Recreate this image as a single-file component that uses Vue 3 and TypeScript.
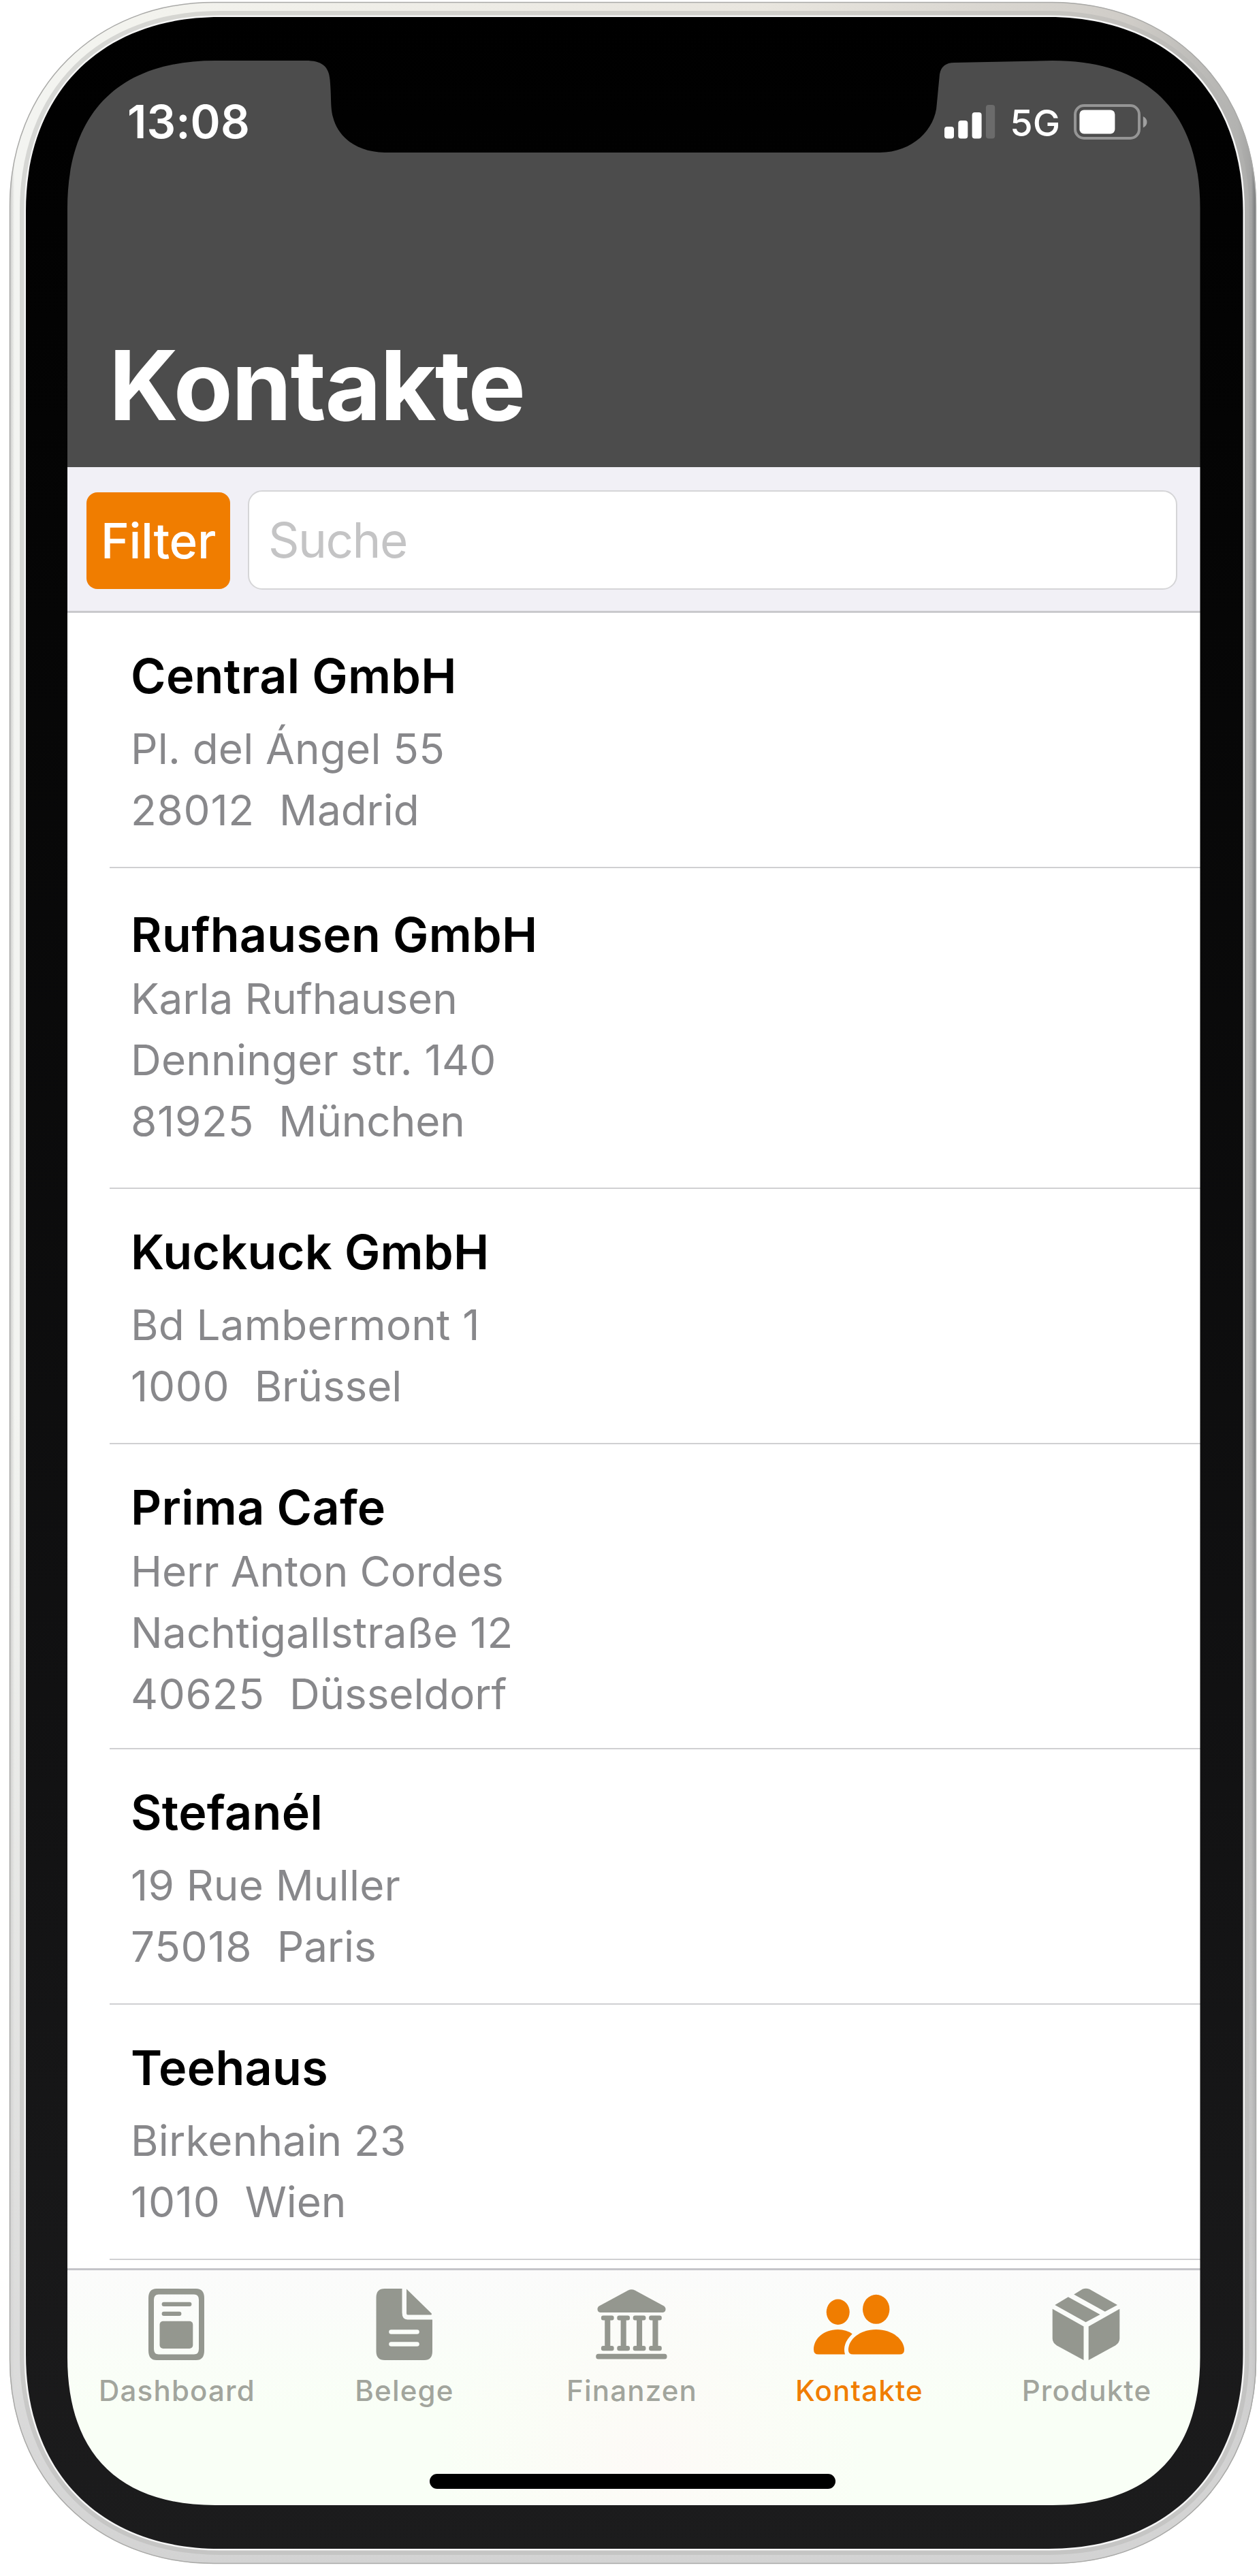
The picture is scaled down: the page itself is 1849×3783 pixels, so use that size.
<script setup lang="ts">
import { ref } from 'vue'

interface Contact {
  name: string
  person?: string
  street: string
  zip: string
  city: string
  roomy?: boolean
}

type TabId = 'dashboard' | 'belege' | 'finanzen' | 'kontakte' | 'produkte'

interface Tab {
  id: TabId
  label: string
}

const contacts: Contact[] = [
  { name: 'Central GmbH', street: 'Pl. del Ángel 55', zip: '28012', city: 'Madrid' },
  { name: 'Rufhausen GmbH', person: 'Karla Rufhausen', street: 'Denninger str. 140', zip: '81925', city: 'München', roomy: true },
  { name: 'Kuckuck GmbH', street: 'Bd Lambermont 1', zip: '1000', city: 'Brüssel' },
  { name: 'Prima Cafe', person: 'Herr Anton Cordes', street: 'Nachtigallstraße 12', zip: '40625', city: 'Düsseldorf' },
  { name: 'Stefanél', street: '19 Rue Muller', zip: '75018', city: 'Paris' },
  { name: 'Teehaus', street: 'Birkenhain 23', zip: '1010', city: 'Wien' },
]

const tabs: Tab[] = [
  { id: 'dashboard', label: 'Dashboard' },
  { id: 'belege', label: 'Belege' },
  { id: 'finanzen', label: 'Finanzen' },
  { id: 'kontakte', label: 'Kontakte' },
  { id: 'produkte', label: 'Produkte' },
]

const active = ref<TabId>('kontakte')
const query = ref('')
const columns = [882.9, 906.3, 929.7, 953.1]
</script>

<template>
  <div class="device">
    <main class="screen">
      <header class="header">
        <div class="status">
          <span class="time">13:08</span>
          <div class="status-right">
            <svg class="signal" viewBox="0 0 75 50">
              <rect x="0" y="32" width="14" height="17.5" rx="4" />
              <rect x="20.3" y="23" width="14" height="26.5" rx="4" />
              <rect x="40.6" y="11" width="14" height="38.5" rx="4" />
              <rect class="dim" x="60.9" y="0" width="13.3" height="49.5" rx="4" />
            </svg>
            <span class="network">5G</span>
            <svg class="battery" viewBox="0 0 110 52">
              <rect class="shell" x="2" y="2" width="94" height="48" rx="13" />
              <rect x="8.4" y="8.4" width="52" height="35" rx="6.5" />
              <path class="nub" d="M101.8 18c7.6 3 7.6 13.500 0 16.500z" />
            </svg>
          </div>
        </div>
        <h1 class="title">Kontakte</h1>
      </header>

      <div class="toolbar">
        <button class="filter" type="button">Filter</button>
        <input v-model="query" class="search" type="text" placeholder="Suche" />
      </div>

      <ul class="list">
        <li
          v-for="contact in contacts"
          :key="contact.name"
          class="contact"
          :class="{ detailed: contact.person, roomy: contact.roomy }"
        >
          <h2 class="name">{{ contact.name }}</h2>
          <p v-if="contact.person" class="line person">{{ contact.person }}</p>
          <p class="line">{{ contact.street }}</p>
          <p class="line place"><span class="zip">{{ contact.zip }}&nbsp;&nbsp;</span>{{ contact.city }}</p>
        </li>
      </ul>

      <nav class="tabbar">
        <div class="tabs">
          <button
            v-for="tab in tabs"
            :key="tab.id"
            class="tab"
            :class="{ active: tab.id === active }"
            type="button"
            @click="active = tab.id"
          >
            <svg v-if="tab.id === 'dashboard'" class="icon" viewBox="192 3358 132 112">
              <path
                fill-rule="evenodd"
                d="M229 3361h58q12 0 12 14v77q0 14-12 14h-58q-12 0-12-14v-77q0-14 12-14zM232 3369.500q-7 0-7 8v72q0 8 7 8h52q7 0 7-8v-72q0-8-7-8z"
              />
              <rect x="236.600" y="3380.700" width="43.800" height="6.400" rx="3" />
              <rect x="236.600" y="3394.700" width="28.800" height="6.400" rx="3" />
              <rect x="233.500" y="3408.700" width="48.800" height="40.300" rx="5" />
            </svg>
            <svg v-else-if="tab.id === 'belege'" class="icon" viewBox="527 3358 132 112">
              <path
                fill-rule="evenodd"
                d="M565 3361H590.500V3396q0 10.500 8 10.500H635V3453q0 13-12 13H565q-12.500 0-12.500-13V3374q0-13 12.500-13zM574.500 3421.200a3.300 3.300 0 0 0 0 6.600h38a3.300 3.300 0 0 0 0-6.600zM574.500 3439.200a3.300 3.300 0 0 0 0 6.600h38a3.300 3.300 0 0 0 0-6.600z"
              />
              <path d="M597 3361.500L633.800 3397.500Q634.500 3399.600 633 3399.600H599.500Q597 3399.600 597 3397z" />
            </svg>
            <svg v-else-if="tab.id === 'finanzen'" class="icon" viewBox="861 3358 132 112">
              <path d="M922.500 3363.500q5-2.500 10 0L975 3386.500q3 2.200 2.500 5.500t-4 4H881.500q-3.500-.5-4-4t2.500-5.500z" />
              <g v-for="x in columns" :key="x">
                <rect :x="x" y="3400.600" width="18.700" height="7" rx="3" />
                <rect :x="x + 5.300" y="3402" width="8.100" height="49" />
                <rect :x="x" y="3445" width="18.700" height="7.200" rx="3" />
              </g>
              <rect x="875.200" y="3456.800" width="104.300" height="7.600" rx="3.500" />
            </svg>
            <svg v-else-if="tab.id === 'kontakte'" class="icon" viewBox="1194 3358 134 112">
              <ellipse cx="1230.700" cy="3395.300" rx="17" ry="18.700" />
              <ellipse cx="1286.700" cy="3391.300" rx="19.700" ry="21.500" />
              <path d="M1251.700 3427.500Q1243 3421 1230.700 3421C1209 3421 1195 3435 1195 3450.500Q1195 3457.600 1202 3457.600H1241Q1236.500 3442 1251.700 3427.500z" />
              <path d="M1286.700 3421C1262 3421 1245.900 3436 1245.900 3451Q1245.900 3457.600 1253 3457.600H1321Q1328 3457.600 1328 3451C1328 3436 1311 3421 1286.700 3421z" />
            </svg>
            <svg v-else class="icon" viewBox="1528 3358 132 112">
              <path d="M1576.200 3369.500L1588.700 3361.800Q1593.600 3359.500 1599 3361.800L1640 3385L1621.800 3394.800z" />
              <path d="M1567.800 3373.300L1614.600 3399L1593.600 3410.300L1548.300 3385z" />
              <path d="M1544.700 3390.800L1590.500 3416.500V3466L1551 3444.500Q1544.700 3440.500 1544.700 3434z" />
              <path d="M1643.300 3390.800L1597.700 3416.500V3466L1637 3444.500Q1643.300 3440.500 1643.300 3434z" />
            </svg>
            <span class="tab-label">{{ tab.label }}</span>
          </button>
        </div>
        <div class="home-indicator"></div>
      </nav>
    </main>

    <svg class="frame" viewBox="0 0 1849 3783" aria-hidden="true">
      <defs>
        <linearGradient id="metal" x1="0" x2="1" y1="0" y2="0">
          <stop offset="0" stop-color="#c9c9c7" />
          <stop offset=".004" stop-color="#f3f4f1" />
          <stop offset=".1" stop-color="#f3f3ee" />
          <stop offset=".6" stop-color="#e9e6df" />
          <stop offset=".9" stop-color="#cfccc7" />
          <stop offset=".985" stop-color="#b2b2b0" />
          <stop offset=".996" stop-color="#a4a4a3" />
          <stop offset="1" stop-color="#6f7173" />
        </linearGradient>
        <linearGradient id="metal-low" x1="0" x2="0" y1="0" y2="1">
          <stop offset=".55" stop-color="#d4d4d4" stop-opacity="0" />
          <stop offset=".93" stop-color="#d6d6d6" stop-opacity=".85" />
          <stop offset="1" stop-color="#d3d3d3" />
        </linearGradient>
        <linearGradient id="glass" x1="0" x2="0" y1="0" y2="1">
          <stop offset="0" stop-color="#000000" />
          <stop offset=".2" stop-color="#050505" />
          <stop offset=".7" stop-color="#121213" />
          <stop offset="1" stop-color="#1c1c1d" />
        </linearGradient>
        <path
          id="body"
          d="M14 303C14 129 140 3 314 3H1545C1719 3 1845 129 1845 303V3465C1845 3639 1719 3765 1545 3765H314C140 3765 14 3639 14 3465zM38 310V3458C38 3632 149 3743 323 3743H1540C1714 3743 1825.500 3632 1825.500 3458V310C1825.500 136 1714 25 1540 25H323C149 25 38 136 38 310z"
        />
        <path
          id="edge"
          d="M38 310V3458C38 3632 149 3743 323 3743H1540C1714 3743 1825.500 3632 1825.500 3458V310C1825.500 136 1714 25 1540 25H323C149 25 38 136 38 310z"
        />
      </defs>
      <use href="#body" fill="url(#metal)" fill-rule="evenodd" />
      <use href="#body" fill="url(#metal-low)" fill-rule="evenodd" />
      <path
        class="outline"
        d="M14.500 303C14.500 129 140 3.500 314 3.500H1545C1719 3.500 1844.500 129 1844.500 303V3465C1844.500 3639 1719 3764.500 1545 3764.500H314C140 3764.500 14.500 3639 14.500 3465z"
      />
      <use href="#edge" class="shade" />
      <use href="#edge" class="rim" />
      <path
        fill="url(#glass)"
        fill-rule="evenodd"
        d="M38 310V3458C38 3632 149 3743 323 3743H1540C1714 3743 1825.500 3632 1825.500 3458V310C1825.500 136 1714 25 1540 25H323C149 25 38 136 38 310zM99 306C99 165 175 89 316 89H449C472 89 483 97 484.500 117C487 145 485 157 489 172C497 203 525 223 565 224H1292C1340 224 1374 190 1375.800 153L1380 109Q1383 92 1401.500 92L1546 89C1687 89 1762.500 165 1762.500 306V3462C1762.500 3603 1687 3679 1546 3679H316C175 3679 99 3603 99 3462z"
      />
    </svg>
  </div>
</template>

<style>
body {
  margin: 0;
  background: #fff;
}
</style>

<style scoped>
.device {
  position: relative;
  box-sizing: border-box;
  width: 1849px;
  height: 3783px;
  padding: 89px 86px 104px 99px;
  overflow: hidden;
  background: #fff;
  font-family: Inter, 'Liberation Sans', sans-serif;
}

.frame {
  position: absolute;
  inset: 0;
  width: 1849px;
  height: 3783px;
  pointer-events: none;
}

/* The inner halves of these strokes are covered by screen content or glass. */
.outline,
.shade,
.rim {
  fill: none;
}

.outline {
  stroke: #a9a9a7;
  stroke-width: 1.5;
}

.shade {
  stroke: #b4b4b1;
  stroke-opacity: 0.45;
  stroke-width: 18;
}

.rim {
  stroke: #f6f6f6;
  stroke-width: 5;
}

.screen {
  display: flex;
  flex-direction: column;
  width: 1664px;
  height: 3590px;
  overflow: hidden;
  background: #fff;
  clip-path: inset(0 round 170px);
}

.header {
  box-sizing: border-box;
  height: 597px;
  padding: 50px 76px 0 88px;
  background: #4c4c4c;
  color: #fff;
}

.status {
  display: flex;
  align-items: center;
  justify-content: space-between;
  height: 80px;
}

.time {
  font-size: 67px;
  font-weight: 600;
  line-height: 80px;
  letter-spacing: 0.1px;
}

.status-right {
  display: flex;
  align-items: center;
}

.signal {
  width: 75px;
  height: 50px;
  fill: #fff;
}

.signal .dim {
  fill: #6b6b6b;
}

.network {
  margin: 3px 20px 0 21px;
  font-size: 54px;
  font-weight: 500;
  line-height: 60px;
}

.battery {
  width: 110px;
  height: 52px;
  fill: #fff;
}

.battery .shell {
  fill: none;
  stroke: #959595;
  stroke-width: 4;
}

.battery .nub {
  fill: #a0a0a0;
}

.title {
  margin: 266px 0 0 -27px;
  font-size: 142px;
  font-weight: 700;
  line-height: 160px;
  letter-spacing: -1.8px;
}

.toolbar {
  display: flex;
  box-sizing: border-box;
  height: 214px;
  padding: 34px 34px 0 28px;
  border-bottom: 3px solid #c9c9cc;
  background: #f1f0f6;
}

.filter {
  width: 211px;
  height: 142px;
  margin: 3px 26px 0 0;
  padding: 0;
  border: 0;
  border-radius: 16px;
  background: #f07d00;
  color: #fff;
  font: 500 71px/142px Inter, 'Liberation Sans', sans-serif;
  letter-spacing: -0.4px;
}

.search {
  box-sizing: border-box;
  flex: 1;
  min-width: 0;
  height: 146px;
  padding: 0 0 0 28px;
  border: 2px solid #d5d5d7;
  border-radius: 21px;
  background: #fff;
  color: #000;
  font: 400 71px Inter, 'Liberation Sans', sans-serif;
  letter-spacing: -1.5px;
}

.search::placeholder {
  color: #c4c4c5;
  opacity: 1;
}

.list {
  flex: 1;
  min-height: 0;
  margin: 0 0 0 62px;
  padding: 0;
  list-style: none;
}

.contact {
  box-sizing: border-box;
  height: 375px;
  padding: 53px 0 0 31px;
  border-bottom: 2px solid #d0d0d2;
}

.contact.detailed {
  height: 448px;
}

.contact.roomy {
  height: 471px;
  padding-top: 58px;
}

.name {
  margin: 0 0 22px;
  color: #000;
  font-size: 70px;
  font-weight: 600;
  line-height: 80px;
  letter-spacing: 0.3px;
}

.detailed .name {
  margin-bottom: 9px;
}

.line {
  margin: 0;
  color: #88888b;
  font-size: 62px;
  font-weight: 400;
  line-height: 90px;
  letter-spacing: 0.2px;
}

.person,
.place {
  letter-spacing: -0.1px;
}

.zip {
  letter-spacing: 0.7px;
}

.tabbar {
  box-sizing: border-box;
  height: 348px;
  border-top: 3px solid #c4c4c9;
  background:
    radial-gradient(ellipse 320px 300px at 860px 280px, #fdfaf7 0%, rgba(253, 250, 247, 0) 100%),
    linear-gradient(#fbfbfb, #f9fff6 60%);
}

.tabs {
  display: grid;
  grid-template-columns: repeat(5, 334px);
  margin-left: -7px;
  padding-top: 24px;
}

.tab {
  display: flex;
  flex-direction: column;
  align-items: center;
  padding: 0;
  border: 0;
  background: none;
  color: #a2a59d;
  font-family: inherit;
}

.icon {
  width: 132px;
  height: 112px;
  fill: #94978f;
}

.tab-label {
  margin-top: 15px;
  padding-left: 2px;
  font-size: 42px;
  font-weight: 500;
  line-height: 52px;
  letter-spacing: 1.2px;
}

.tab.active {
  color: #f07d00;
}

.tab.active .icon {
  width: 134px;
  fill: #f07d00;
}

.home-indicator {
  width: 596px;
  height: 22px;
  margin: 96px 0 0 532px;
  border-radius: 11px;
  background: #000;
}
</style>
